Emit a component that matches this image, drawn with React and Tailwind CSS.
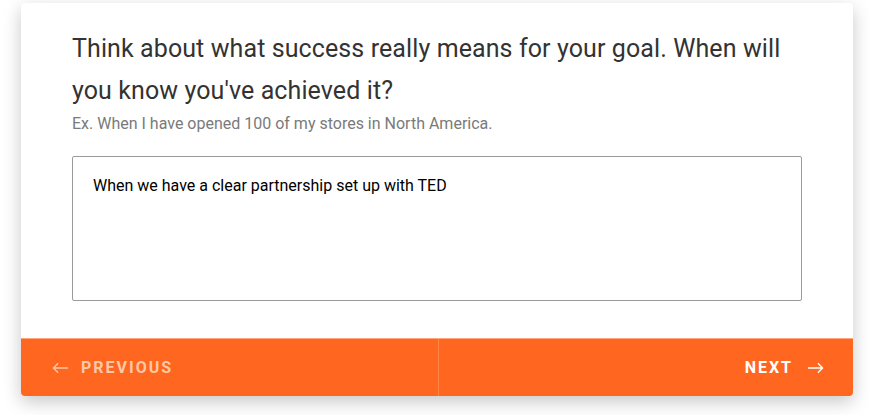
import React, { useState } from 'react';

function ArrowLeft({ className }) {
  return (
    <svg className={className} viewBox="0 0 18 12" fill="none" stroke="currentColor" strokeWidth="1.4">
      <path d="M17 6H1.5M6.5 1L1.5 6l5 5" />
    </svg>
  );
}

function ArrowRight({ className }) {
  return (
    <svg className={className} viewBox="0 0 18 12" fill="none" stroke="currentColor" strokeWidth="1.4">
      <path d="M1 6h15.5M11.5 1l5 5-5 5" />
    </svg>
  );
}

export default function App() {
  const [answer, setAnswer] = useState('When we have a clear partnership set up with TED');

  return (
    <div className="w-[878px] h-[415px] bg-white pt-[3px] pl-[21px] font-['Roboto',sans-serif]">
      <div className="w-[832px] h-[393px] bg-white rounded-[4px] shadow-[0_6px_18px_rgba(0,0,0,0.22)] flex flex-col overflow-hidden">
        {/* Question */}
        <div className="flex-1 px-[51px] pt-[25px]">
          <h2 className="max-w-[712px] text-[25px] leading-[42px] tracking-[0.1px] text-[#333] font-normal">
            Think about what success really means for your goal. When will you know you've achieved it?
          </h2>
          <p className="text-[16px] leading-[20px] text-[#7a7a7a] mt-[2px]">
            Ex. When I have opened 100 of my stores in North America.
          </p>
          <textarea
            value={answer}
            onChange={(e) => setAnswer(e.target.value)}
            className="mt-[22px] block w-[730px] h-[145px] resize-none border border-[#9b9b9b] rounded-[2px] px-[20px] pt-[18px] text-[16px] leading-[22px] text-black outline-none"
          />
        </div>

        {/* Navigation */}
        <div className="h-[58px] bg-[#ff6720] border-t border-[#ffa77c] flex">
          <button className="flex-1 flex items-center gap-[12px] pl-[31px] text-[#ffc8a8] border-r border-[#ff8548]">
            <ArrowLeft className="w-[17px] h-[12px]" />
            <span className="text-[16px] font-bold tracking-[2px]">PREVIOUS</span>
          </button>
          <button className="flex-1 flex items-center justify-end gap-[14px] pr-[29px] text-white">
            <span className="text-[16px] font-bold tracking-[2px]">NEXT</span>
            <ArrowRight className="w-[17px] h-[12px]" />
          </button>
        </div>
      </div>
    </div>
  );
}
